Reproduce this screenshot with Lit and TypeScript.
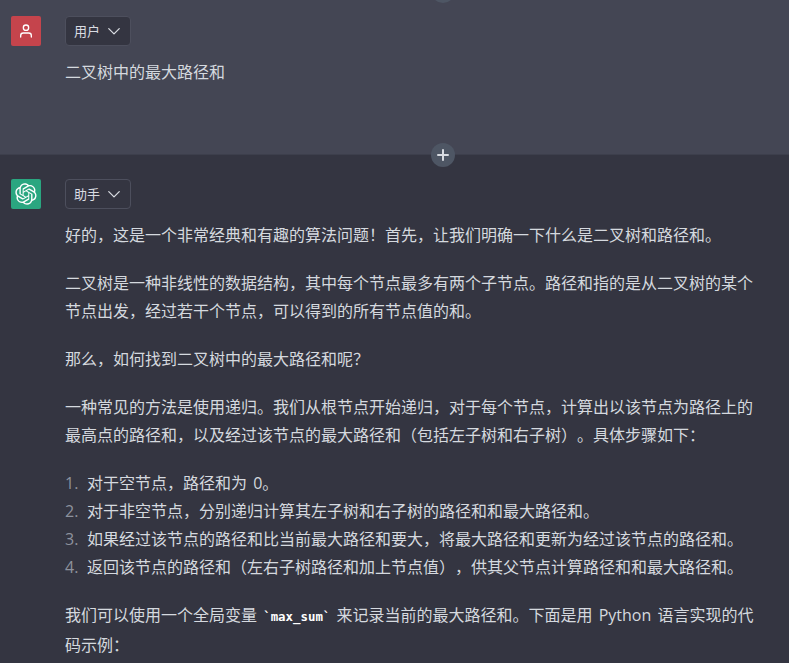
import { LitElement, html, css, svg } from "lit";
import { customElement } from "lit/decorators.js";

const LOGO = "M37.5324 16.8707C37.9808 15.5241 38.1363 14.0974 37.9886 12.6859C37.8409 11.2744 37.3934 9.91076 36.676 8.68622C35.6126 6.83404 33.9882 5.3676 32.0373 4.4985C30.0864 3.62941 27.9098 3.40259 25.8215 3.85078C24.8796 2.7893 23.7219 1.94125 22.4257 1.36341C21.1295 0.785575 19.7249 0.491269 18.3058 0.500197C16.1708 0.495044 14.0893 1.16803 12.3614 2.42214C10.6335 3.67624 9.34853 5.44666 8.6917 7.47815C7.30085 7.76286 5.98686 8.3414 4.8377 9.17505C3.68854 10.0087 2.73073 11.0782 2.02839 12.312C0.956464 14.1591 0.498905 16.2988 0.721698 18.4228C0.944492 20.5467 1.83612 22.5449 3.268 24.1293C2.81966 25.4759 2.66413 26.9026 2.81182 28.3141C2.95951 29.7256 3.40701 31.0892 4.12437 32.3138C5.18791 34.1659 6.8123 35.6322 8.76321 36.5013C10.7141 37.3704 12.8907 37.5973 14.9789 37.1492C15.9208 38.2107 17.0786 39.0587 18.3747 39.6366C19.6709 40.2144 21.0755 40.5087 22.4946 40.4998C24.6307 40.5054 26.7133 39.8321 28.4418 38.5772C30.1704 37.3223 31.4556 35.5506 32.1119 33.5179C33.5027 33.2332 34.8167 32.6547 35.9659 31.821C37.115 30.9874 38.0728 29.9178 38.7752 28.684C39.8458 26.8371 40.3023 24.6979 40.0789 22.5748C39.8556 20.4517 38.9639 18.4544 37.5324 16.8707ZM22.4978 37.8849C20.7443 37.8874 19.0459 37.2733 17.6994 36.1501C17.7601 36.117 17.8666 36.0586 17.936 36.0161L25.9004 31.4156C26.1003 31.3019 26.2663 31.137 26.3813 30.9378C26.4964 30.7386 26.5563 30.5124 26.5549 30.2825V19.0542L29.9213 20.998C29.9389 21.0068 29.9541 21.0198 29.9656 21.0359C29.977 21.052 29.9842 21.0707 29.9867 21.0902V30.3889C29.9842 32.375 29.1946 34.2791 27.7909 35.6841C26.3872 37.0892 24.4838 37.8806 22.4978 37.8849ZM6.39227 31.0064C5.51397 29.4888 5.19742 27.7107 5.49804 25.9832C5.55718 26.0187 5.66048 26.0818 5.73461 26.1244L13.699 30.7248C13.8975 30.8408 14.1233 30.902 14.3532 30.902C14.583 30.902 14.8088 30.8408 15.0073 30.7248L24.731 25.1103V28.9979C24.7321 29.0177 24.7283 29.0376 24.7199 29.0556C24.7115 29.0736 24.6988 29.0893 24.6829 29.1012L16.6317 33.7497C14.9096 34.7416 12.8643 35.0097 10.9447 34.4954C9.02506 33.9811 7.38785 32.7263 6.39227 31.0064ZM4.29707 13.6194C5.17156 12.0998 6.55279 10.9364 8.19885 10.3327C8.19885 10.4013 8.19491 10.5228 8.19491 10.6071V19.808C8.19351 20.0378 8.25334 20.2638 8.36823 20.4629C8.48312 20.6619 8.64893 20.8267 8.84863 20.9404L18.5723 26.5542L15.206 28.4979C15.1894 28.5089 15.1703 28.5155 15.1505 28.5173C15.1307 28.5191 15.1107 28.516 15.0924 28.5082L7.04046 23.8557C5.32135 22.8601 4.06716 21.2235 3.55289 19.3046C3.03862 17.3858 3.30624 15.3413 4.29707 13.6194ZM31.955 20.0556L22.2312 14.4411L25.5976 12.4981C25.6142 12.4872 25.6333 12.4805 25.6531 12.4787C25.6729 12.4769 25.6928 12.4801 25.7111 12.4879L33.7631 17.1364C34.9967 17.849 36.0017 18.8982 36.6606 20.1613C37.3194 21.4244 37.6047 22.849 37.4832 24.2684C37.3617 25.6878 36.8382 27.0432 35.9743 28.1759C35.1103 29.3086 33.9415 30.1717 32.6047 30.6641C32.6047 30.5947 32.6047 30.4733 32.6047 30.3889V21.188C32.6066 20.9586 32.5474 20.7328 32.4332 20.5338C32.319 20.3348 32.154 20.1698 31.955 20.0556ZM35.3055 15.0128C35.2464 14.9765 35.1431 14.9142 35.069 14.8717L27.1045 10.2712C26.906 10.1554 26.6803 10.0943 26.4504 10.0943C26.2206 10.0943 25.9948 10.1554 25.7963 10.2712L16.0726 15.8858V11.9982C16.0715 11.9783 16.0753 11.9585 16.0837 11.9405C16.0921 11.9225 16.1048 11.9068 16.1207 11.8949L24.1719 7.25025C25.4053 6.53903 26.8158 6.19376 28.2383 6.25482C29.6608 6.31589 31.0364 6.78077 32.2044 7.59508C33.3723 8.40939 34.2842 9.53945 34.8334 10.8531C35.3826 12.1667 35.5464 13.6095 35.3055 15.0128ZM14.2424 21.9419L10.8752 19.9981C10.8576 19.9893 10.8423 19.9763 10.8309 19.9602C10.8195 19.9441 10.8122 19.9254 10.8098 19.9058V10.6071C10.8107 9.18295 11.2173 7.78848 11.9819 6.58696C12.7466 5.38544 13.8377 4.42659 15.1275 3.82264C16.4173 3.21869 17.8524 2.99464 19.2649 3.1767C20.6775 3.35876 22.0089 3.93941 23.1034 4.85067C23.0427 4.88379 22.937 4.94215 22.8668 4.98473L14.9024 9.58517C14.7025 9.69878 14.5366 9.86356 14.4215 10.0626C14.3065 10.2616 14.2466 10.4877 14.2479 10.7175L14.2424 21.9419ZM16.071 17.9991L20.4018 15.4978L24.7325 17.9975V22.9985L20.4018 25.4983L16.071 22.9985V17.9991Z";

const STEPS = [
  html`对于空节点，路径和为 0。`,
  html`对于非空节点，分别递归计算其左子树和右子树的路径和和最大路径和。`,
  html`如果经过该节点的路径和比当前最大路径和要大，将最大路径和更新为经过该节点的路径和。`,
  html`返回该节点的路径和（左右子树路径和加上节点值），供其父节点计算路径和和最大路径和。`,
];

@customElement("app-root")
export class AppRoot extends LitElement {
  static styles = css`
    :host {
      display: block;
      position: relative;
      width: 100%;
      height: 663px;
      overflow: hidden;
      background: #343541;
      color: #d5d9df;
      font-family: "Segoe UI", "Open Sans", "Noto Sans CJK SC", sans-serif;
      font-size: 16px;
      line-height: 28px;
      word-spacing: 2px;
      text-spacing-trim: space-all;
    }
    .turn {
      display: flex;
      gap: 24px;
      padding: 16px 34px 0 11px;
    }
    .turn.user {
      height: 155px;
      box-sizing: border-box;
      background: #444654;
      border-bottom: 1px solid #3d3f4c;
    }
    .turn.bot {
      padding-top: 24px;
    }
    .avatar {
      flex: none;
      width: 30px;
      height: 30px;
      border-radius: 2px;
      display: flex;
      align-items: center;
      justify-content: center;
      color: #fff;
    }
    .avatar.red { background: #c5444c; }
    .avatar.green { background: #2aa680; }
    .body { flex: 1; min-width: 0; }
    .role {
      display: inline-flex;
      align-items: center;
      box-sizing: border-box;
      width: 66px;
      height: 30px;
      padding-left: 8px;
      gap: 7px;
      border: 1px solid #4d4f5d;
      border-radius: 4px;
      font-size: 13px;
      line-height: 20px;
      color: #d9dce2;
    }
    .role.filled { background: #343541; }
    .role svg { flex: none; }
    .prose { margin-top: 12px; }
    .prose p { margin: 0 0 20px; }
    .prose ol {
      list-style: none;
      margin: 0 0 20px;
      padding: 0;
    }
    .prose li { display: flex; }
    .num { flex: none; width: 22px; color: #8e929d; }
    code {
      font-family: "DejaVu Sans Mono", monospace;
      font-size: 12.4px;
      font-weight: 700;
      color: #fff;
    }
    .plus {
      position: absolute;
      left: 431px;
      width: 24px;
      height: 24px;
      border-radius: 50%;
      background: #4e5664;
      display: flex;
      align-items: center;
      justify-content: center;
      color: #d9dce2;
    }
    .plus.mid { top: 143px; }
    .plus.top { top: -21px; }
  `;

  private chevron() {
    return html`<svg width="14" height="14" viewBox="0 0 24 24" fill="none" stroke="currentColor" stroke-width="2.2" stroke-linecap="round" stroke-linejoin="round"><polyline points="3 8 12 17 21 8"></polyline></svg>`;
  }

  private plusIcon() {
    return html`<svg width="14" height="14" viewBox="0 0 14 14" fill="none" stroke="currentColor" stroke-width="2" stroke-linecap="round"><path d="M7 2v10M2 7h10"></path></svg>`;
  }

  render() {
    return html`
      <div class="turn user">
        <div class="avatar red">
          <svg width="16" height="16" viewBox="0 0 24 24" fill="none" stroke="currentColor" stroke-width="2" stroke-linecap="round" stroke-linejoin="round">
            <path d="M20 21v-2a4 4 0 0 0-4-4H8a4 4 0 0 0-4 4v2"></path>
            <circle cx="12" cy="7" r="4"></circle>
          </svg>
        </div>
        <div class="body">
          <div class="role filled">用户${this.chevron()}</div>
          <div class="prose"><p>二叉树中的最大路径和</p></div>
        </div>
      </div>
      <div class="turn bot">
        <div class="avatar green">
          <svg width="22" height="22" viewBox="0 0 41 41" fill="currentColor">${svg`<path d=${LOGO}></path>`}</svg>
        </div>
        <div class="body">
          <div class="role">助手${this.chevron()}</div>
          <div class="prose">
            <p>好的，这是一个非常经典和有趣的算法问题！首先，让我们明确一下什么是二叉树和路径和。</p>
            <p>二叉树是一种非线性的数据结构，其中每个节点最多有两个子节点。路径和指的是从二叉树的某个节点出发，经过若干个节点，可以得到的所有节点值的和。</p>
            <p>那么，如何找到二叉树中的最大路径和呢？</p>
            <p>一种常见的方法是使用递归。我们从根节点开始递归，对于每个节点，计算出以该节点为路径上的最高点的路径和，以及经过该节点的最大路径和（包括左子树和右子树）。具体步骤如下：</p>
            <ol>
              ${STEPS.map((s, i) => html`<li><span class="num">${i + 1}.</span><span>${s}</span></li>`)}
            </ol>
            <p>我们可以使用一个全局变量 <code>\`max_sum\`</code> 来记录当前的最大路径和。下面是用 Python 语言实现的代码示例：</p>
          </div>
        </div>
      </div>
      <div class="plus top">${this.plusIcon()}</div>
      <div class="plus mid">${this.plusIcon()}</div>
    `;
  }
}
